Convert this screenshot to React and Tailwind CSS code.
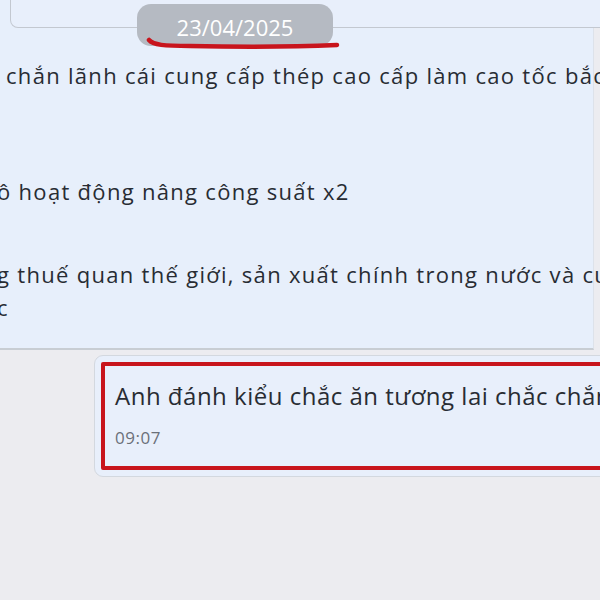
const FONT = { fontFamily: '"Open Sans", "Noto Sans", sans-serif' }

const DatePill = () => (
  <div className="absolute left-[137px] top-[4px] w-[196px] h-[42px] pt-[4px] rounded-[14px] bg-[#b5bac2] flex items-center justify-center">
    <span className="text-white text-[22px] leading-[28px]">23/04/2025</span>
  </div>
)

// hand-drawn red underline beneath the date
const Underline = () => (
  <svg className="absolute left-[140px] top-[36px]" width="206" height="18" viewBox="0 0 206 18">
    <path
      d="M9 4 C 13 9, 24 10, 50 10 C 100 11, 150 11, 197 9"
      fill="none"
      stroke="#c8141c"
      strokeWidth="4.5"
      strokeLinecap="round"
    />
  </svg>
)

export default function App() {
  return (
    <div className="relative w-[600px] h-[600px] overflow-hidden bg-[#ececf0] text-[#282c33]" style={FONT}>
      {/* previous message area */}
      <div className="h-[350px] bg-[#e7effb] border-b-2 border-[#c8cdd3] mr-[6px] border-r border-r-[#dde2ea]">
        <div className="h-[28px] ml-[10px] -mr-[20px] bg-[#e8effb] border border-t-0 border-[#c3c8d0] rounded-bl-[8px]" />
        <div className="text-[22px] leading-[33px] tracking-[1.3px]">
          <p className="mt-[31px] pl-[6px] whitespace-nowrap">chắn lãnh cái cung cấp thép cao cấp làm cao tốc bắc nam</p>
          <p className="mt-[83px] -ml-[3px] whitespace-nowrap">ô hoạt động nâng công suất x2</p>
          <p className="mt-[50px] -ml-[3px] whitespace-nowrap">g thuế quan thế giới, sản xuất chính trong nước và cung</p>
          <p className="-ml-[3px]">c</p>
        </div>
      </div>

      {/* my message */}
      <div className="ml-[94px] mt-[5px] -mr-[20px] rounded-[9px] border border-[#d3d8df] bg-[#e8effb] p-[6px]">
        <div className="border-4 border-[#c8141c] rounded-[2px] pl-[10px] pt-[15px] pb-[18px]">
          <p className="text-[24px] leading-[30px] tracking-[0.5px] whitespace-nowrap">Anh đánh kiểu chắc ăn tương lai chắc chắn rồi</p>
          <p className="mt-[17px] text-[17px] leading-[20px] tracking-[0.5px] text-[#6b7079]">09:07</p>
        </div>
      </div>

      <DatePill />
      <Underline />
    </div>
  )
}
